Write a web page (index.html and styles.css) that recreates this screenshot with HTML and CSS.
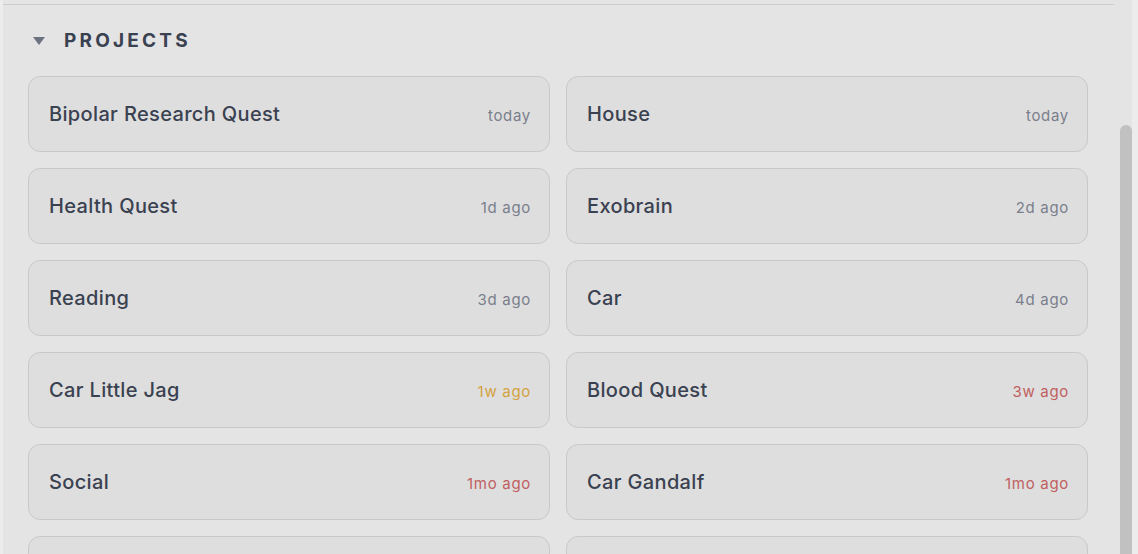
FILE: index.html
```html
<!DOCTYPE html>
<html lang="en">
<head>
<meta charset="utf-8">
<title>Projects</title>
<link rel="stylesheet" href="styles.css">
</head>
<body>
<div class="panel">
  <div class="content">
    <section class="section">
      <div class="section-head">
        <span class="caret"></span>
        <h2 class="section-title">PROJECTS</h2>
      </div>
      <div class="grid">
        <div class="card"><span class="title">Bipolar Research Quest</span><span class="time">today</span></div>
        <div class="card"><span class="title">House</span><span class="time">today</span></div>
        <div class="card"><span class="title">Health Quest</span><span class="time">1d ago</span></div>
        <div class="card"><span class="title">Exobrain</span><span class="time">2d ago</span></div>
        <div class="card"><span class="title">Reading</span><span class="time">3d ago</span></div>
        <div class="card"><span class="title">Car</span><span class="time">4d ago</span></div>
        <div class="card"><span class="title">Car Little Jag</span><span class="time warn">1w ago</span></div>
        <div class="card"><span class="title">Blood Quest</span><span class="time stale">3w ago</span></div>
        <div class="card"><span class="title">Social</span><span class="time stale">1mo ago</span></div>
        <div class="card"><span class="title">Car Gandalf</span><span class="time stale">1mo ago</span></div>
        <div class="card"></div>
        <div class="card"></div>
      </div>
    </section>
  </div>
  <div class="track"><div class="thumb"></div></div>
</div>
</body>
</html>
```
FILE: styles.css
```css
html, body {
  margin: 0;
  padding: 0;
  background: #ececec;
  height: 554px;
  overflow: hidden;
}
body {
  font-family: Inter, "Noto Sans", "Liberation Sans", sans-serif;
}
.panel {
  display: flex;
  height: 554px;
  margin: 0 6px 0 3px;
  background: #e4e4e4;
  overflow: hidden;
}
.content {
  flex: 1;
  padding-top: 4px;
  padding-right: 6px;
}
.section {
  border-top: 1px solid #cdcdcd;
  padding: 0 26px 0 25px;
}
.section-head {
  display: flex;
  align-items: center;
  padding-top: 24px;
  margin-bottom: 23px;
  height: 24px;
}
.caret {
  width: 0;
  height: 0;
  margin-left: 5px;
  margin-right: 18px;
  border-left: 6.5px solid transparent;
  border-right: 6.5px solid transparent;
  border-top: 8px solid #6d7280;
}
.section-title {
  margin: 0;
  margin-left: 1px;
  font-size: 19px;
  line-height: 24px;
  font-weight: 700;
  letter-spacing: 3.2px;
  color: #3a4150;
}
.grid {
  display: grid;
  grid-template-columns: 522px 522px;
  gap: 16px;
}
.card {
  box-sizing: border-box;
  height: 76px;
  display: flex;
  align-items: center;
  justify-content: space-between;
  padding: 0 18px 0 20px;
  background: #dedede;
  border: 1px solid #c9c9c9;
  border-radius: 12px;
}
.title {
  font-size: 20px;
  font-weight: 500;
  letter-spacing: 0.35px;
  color: #3a4150;
}
.time {
  font-size: 15px;
  letter-spacing: 0.7px;
  color: #7a7f8c;
  padding-top: 2px;
}
.time.warn { color: #d4a23e; }
.time.stale { color: #c0605f; }
.track {
  width: 12px;
  padding-top: 125px;
}
.thumb {
  height: 500px;
  background: #c1c1c1;
  border-radius: 6px 6px 0 0;
}
```
